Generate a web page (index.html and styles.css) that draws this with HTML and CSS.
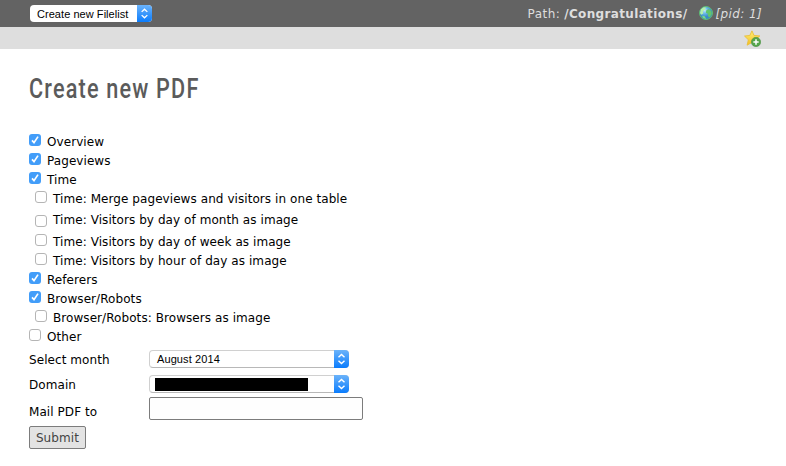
FILE: index.html
```html
<!DOCTYPE html>
<html lang="en">
<head>
<meta charset="utf-8">
<title>Create new PDF</title>
<link rel="stylesheet" href="styles.css">
</head>
<body>
<svg class="defs" aria-hidden="true">
  <defs>
    <radialGradient id="sea" cx=".4" cy=".3"><stop offset="0" stop-color="#c5eafa"/><stop offset=".5" stop-color="#68b7e8"/><stop offset="1" stop-color="#3a8bc8"/></radialGradient>
    <linearGradient id="gold" x1="0" y1="0" x2="0" y2="1"><stop offset="0" stop-color="#fff176"/><stop offset="1" stop-color="#f3bd22"/></linearGradient>
    <symbol id="arrows" viewBox="0 0 15 18"><path d="M4.5 7.3 7.5 4.4l3 2.9M4.5 10.7l3 2.9 3-2.9" fill="none" stroke="#fff" stroke-width="1.4"/></symbol>
  </defs>
</svg>
<header class="docheader">
  <div class="select select-function"><span class="value">Create new Filelist</span><svg class="knob"><use href="#arrows"/></svg></div>
  <div class="path">
    <span class="path-label">Path:</span><b class="path-name">/Congratulations/</b>
    <svg class="globe" viewBox="0 0 14 14"><circle cx="7" cy="7" r="6.5" fill="url(#sea)" stroke="#5fbf70"/><path d="M2 3.2 4.8 1.3 7 1.8 5.7 4 3.8 5.2 4.3 7.4 2.2 8.7 1 7z" fill="#b5efaa"/><path d="M7.2 4.4 9.5 3l2.8 2.3.5 2.5-2.1 3.4-1.6-.7-.2-2.7-2-1z" fill="#62c56c"/><path d="m3 9.8 2.7.5 1.5 2.6L4 12z" fill="#7bdc85"/></svg>
    <i class="pid">[pid: 1]</i>
  </div>
</header>
<div class="toolbar">
  <svg class="star" viewBox="0 0 16 16"><path d="m7.5.8 1.9 4.3 5.5.5-4 3.5 1.3 5.1-4.5-2.6-4.8 2.7 1.2-5.1L.5 5.7l5-.6z" fill="url(#gold)" stroke="#e8bd35" stroke-width=".8"/><circle cx="11.3" cy="11.3" r="4.4" fill="#55a54b" stroke="#458d40" stroke-width=".5"/><path d="M11.3 8.8v5M8.8 11.3h5" stroke="#fff" stroke-width="1.4"/></svg>
</div>
<main>
  <h1>Create new PDF</h1>
  <div class="options">
    <label class="row"><span class="box on"><svg viewBox="0 0 12 12"><path d="m3 6.4 2 2.2 4-6"/></svg></span><span>Overview</span></label>
    <label class="row"><span class="box on"><svg viewBox="0 0 12 12"><path d="m3 6.4 2 2.2 4-6"/></svg></span><span>Pageviews</span></label>
    <label class="row"><span class="box on"><svg viewBox="0 0 12 12"><path d="m3 6.4 2 2.2 4-6"/></svg></span><span>Time</span></label>
    <label class="row sub"><span class="box"></span><span>Time: Merge pageviews and visitors in one table</span></label>
    <label class="row sub tall"><span class="box"></span><span>Time: Visitors by day of month as image</span></label>
    <label class="row sub"><span class="box"></span><span>Time: Visitors by day of week as image</span></label>
    <label class="row sub"><span class="box"></span><span>Time: Visitors by hour of day as image</span></label>
    <label class="row"><span class="box on"><svg viewBox="0 0 12 12"><path d="m3 6.4 2 2.2 4-6"/></svg></span><span>Referers</span></label>
    <label class="row"><span class="box on"><svg viewBox="0 0 12 12"><path d="m3 6.4 2 2.2 4-6"/></svg></span><span>Browser/Robots</span></label>
    <label class="row sub"><span class="box"></span><span>Browser/Robots: Browsers as image</span></label>
    <label class="row"><span class="box"></span><span>Other</span></label>
  </div>
  <div class="field"><span class="name">Select month</span><div class="select"><span class="value">August 2014</span><svg class="knob"><use href="#arrows"/></svg></div></div>
  <div class="field"><span class="name">Domain</span><div class="select"><span class="redacted"></span><svg class="knob"><use href="#arrows"/></svg></div></div>
  <div class="field mail"><span class="name">Mail PDF to</span><input type="text" aria-label="Mail PDF to"></div>
  <button type="button">Submit</button>
</main>
</body>
</html>
```
FILE: styles.css
```css
* { box-sizing: border-box; }
body { margin: 0; background: #fff; color: #000; font: 12px/19px Verdana, "DejaVu Sans", sans-serif; letter-spacing: .07px; }
.defs { position: absolute; width: 0; height: 0; }
.docheader { display: flex; justify-content: space-between; height: 27px; padding: 5px 24px 0 30px; background: #636363; color: #dedede; }
.select { display: flex; width: 200px; height: 18px; border: 1px solid #d0d0d0; border-bottom-color: #b8b8b8; border-radius: 4px; background: #fff; color: #000; font: 11px/17px "Liberation Sans", sans-serif; letter-spacing: .1px; }
.select-function { width: 122px; height: 17px; border: 0; letter-spacing: .05px; }
.value { flex: 1; padding-left: 7px; white-space: nowrap; }
.select-function .value { line-height: 18px; }
.knob { width: 15px; height: 18px; margin: -1px -1px -1px 0; border-radius: 0 4px 4px 0; background: linear-gradient(#6bb3fa, #0a7cfd); }
.select-function .knob { height: 17px; margin: 0; }
.path { display: flex; height: 18px; line-height: 18px; white-space: nowrap; }
.path-label { margin-right: 4px; letter-spacing: .45px; }
.path-name { letter-spacing: .35px; }
.globe { width: 14px; height: 14px; margin: 1px 2px 0 12px; }
.pid { letter-spacing: .4px; }
.toolbar { display: flex; justify-content: flex-end; height: 22px; padding: 3px 25px 0 0; background: #dedede; }
.star { width: 17px; height: 17px; }
main { padding: 25px 29px 0; }
h1 { width: 230px; height: 30px; margin: 0 0 27px; color: #5b5b5b; font: 500 27.5px/30px Roboto, sans-serif; letter-spacing: 1.5px; white-space: nowrap; transform: scaleX(.787); transform-origin: left; }
.options { padding-bottom: 5px; }
.row { display: flex; gap: 6px; height: 19px; line-height: 23px; }
.sub { padding-left: 6px; }
.box { width: 12px; height: 12px; margin-top: 3px; border: 1px solid #b5b5b5; border-radius: 3px; background: #fff; }
.on { border: 0; background: #429df9; }
.on svg { display: block; width: 12px; height: 12px; fill: none; stroke: #fff; stroke-width: 1.7; }
.tall { height: 24px; line-height: 27px; }
.tall .box { margin-top: 8px; }
.field { display: flex; height: 25px; }
.name { width: 120px; line-height: 20px; }
.redacted { width: 153px; height: 13px; margin: 2px auto 0 5px; background: #000; }
.mail { height: 29px; margin-top: -3px; }
.mail .name { line-height: 30px; }
input { width: 214px; height: 23px; padding: 0 4px; border: 1px solid #7c7c7c; border-radius: 2px; background: #fefefe; }
button { display: block; width: 57px; height: 23px; padding: 0; border: 1px solid #7c7c7c; border-radius: 2px; background: #e3e3e3; color: #434343; font: inherit; letter-spacing: .1px; line-height: 22px; }
```
